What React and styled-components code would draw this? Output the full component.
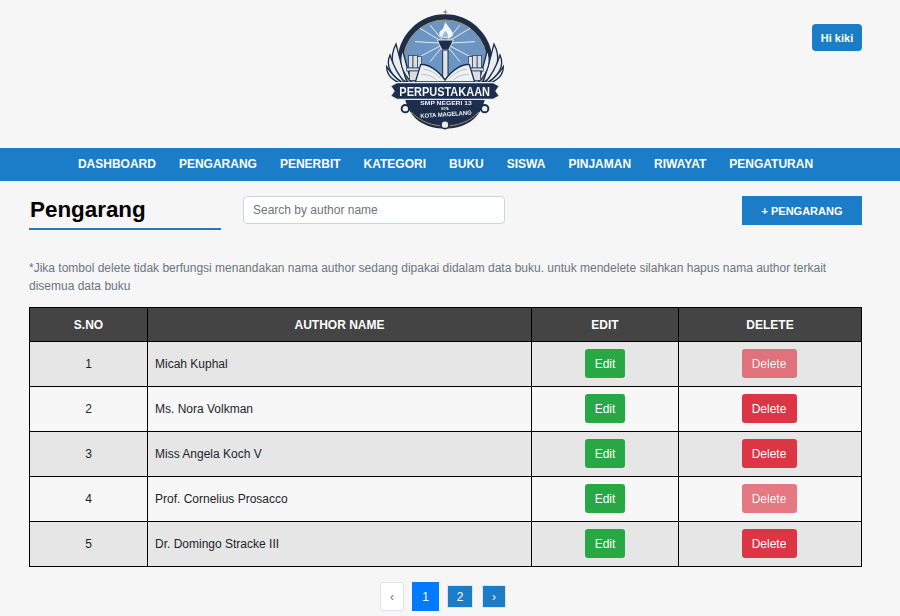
import styled, { createGlobalStyle } from "styled-components";

const GlobalStyle = createGlobalStyle`
  * { box-sizing: border-box; }
  body {
    margin: 0;
    background: #f6f6f6;
    font-family: "Liberation Sans", Arial, sans-serif;
    overflow: hidden;
  }
`;

const Page = styled.div`
  height: 616px;
  overflow: hidden;
`;

const Header = styled.header`
  height: 148px;
  position: relative;
  display: flex;
  justify-content: center;
  padding-right: 10px;
`;

const UserButton = styled.button`
  position: absolute;
  top: 24px;
  right: 38px;
  width: 50px;
  height: 27px;
  border: 0;
  border-radius: 4px;
  background: #1b7dc7;
  color: #fff;
  font: bold 11px "Liberation Sans", Arial, sans-serif;
  padding: 0;
`;

const NavBar = styled.nav`
  height: 33px;
  background: #1b7dc7;
  display: flex;
  justify-content: center;
  align-items: center;
  gap: 23px;
  padding: 0 9px 2px 0;
`;

const NavLink = styled.a`
  color: #fff;
  font-size: 12px;
  font-weight: bold;
  text-decoration: none;
`;

const Content = styled.main`
  padding: 15px 38px 0 29px;
`;

const TopRow = styled.div`
  display: flex;
  align-items: flex-start;
`;

const Title = styled.h1`
  width: 192px;
  height: 34px;
  margin: 0 22px 0 0;
  padding-left: 1px;
  border-bottom: 2px solid #1b7dc7;
  color: #000;
  font-size: 22.4px;
  line-height: 27px;
  font-weight: bold;
`;

const SearchInput = styled.input`
  width: 262px;
  height: 28px;
  padding: 0 9px;
  background: #fff;
  border: 1px solid #ced4da;
  border-radius: 4px;
  font: 12px "Liberation Sans", Arial, sans-serif;
  &::placeholder { color: #6c757d; opacity: 1; }
`;

const AddButton = styled.button`
  width: 120px;
  height: 29px;
  margin-left: auto;
  border: 0;
  background: #1b7dc7;
  color: #fff;
  font: bold 11px "Liberation Sans", Arial, sans-serif;
  padding: 0;
`;

const Note = styled.p`
  margin: 29px 0 12px;
  color: #6c757d;
  font-size: 12px;
  line-height: 18px;
`;

const Table = styled.table`
  width: 832px;
  table-layout: fixed;
  border-collapse: collapse;
  font-size: 12px;
`;

const HeadCell = styled.th`
  height: 34px;
  padding: 0;
  background: #444;
  border: 1px solid #000;
  color: #fff;
  font-size: 12px;
  font-weight: bold;
  text-align: center;
`;

const Row = styled.tr`
  background: ${(p) => (p.$shaded ? "#e6e6e6" : "#f7f7f7")};
`;

const Cell = styled.td`
  height: 45px;
  padding: ${(p) => (p.$tail ? "0 9px 0 7px" : "0 7px")};
  border: 1px solid #000;
  color: #212529;
  text-align: ${(p) => (p.$center ? "center" : "left")};
`;

const ActionButton = styled.button`
  display: block;
  width: ${(p) => (p.$danger ? "55px" : "40px")};
  height: 29px;
  margin: -1px auto 1px;
  padding: 2px 0 0;
  border: 0;
  border-radius: 3px;
  background: ${(p) => (p.$danger ? "#dc3545" : "#28a745")};
  color: #fff;
  font: 12px "Liberation Sans", Arial, sans-serif;
  opacity: ${(p) => (p.$faded ? 0.65 : 1)};
`;

const Pager = styled.div`
  display: flex;
  justify-content: center;
  align-items: center;
  gap: 8px;
  margin-top: 15px;
  padding-right: 5px;
`;

const PageButton = styled.button`
  width: ${(p) => (p.$active ? "27px" : p.$prev || p.$next ? "24px" : "26px")};
  height: ${(p) => (p.$active || p.$prev ? "29px" : "23px")};
  margin-left: ${(p) => (p.$next ? "1px" : "0")};
  padding: 0;
  border: ${(p) => (p.$active ? "0" : "1px solid #dee2e6")};
  border-radius: ${(p) => (p.$prev ? "3px" : "0")};
  background: ${(p) => (p.$active ? "#007bff" : p.$prev ? "#fff" : "#1b7dc7")};
  color: ${(p) => (p.$prev ? "#6c757d" : "#fff")};
  font: 12px "Liberation Sans", Arial, sans-serif;
`;

const authors = [
  { name: "Micah Kuphal", faded: true },
  { name: "Ms. Nora Volkman" },
  { name: "Miss Angela Koch V" },
  { name: "Prof. Cornelius Prosacco", faded: true },
  { name: "Dr. Domingo Stracke III" },
];

const menu = ["DASHBOARD", "PENGARANG", "PENERBIT", "KATEGORI", "BUKU", "SISWA", "PINJAMAN", "RIWAYAT", "PENGATURAN"];

const NAVY = "#1d2f4b";
const PALE = "#e9edf1";

// one side of the emblem, mirrored for the other
const LogoSide = ({ flip }) => (
  <g transform={flip ? "translate(450 0) scale(-1 1)" : undefined}>
    <g fill={PALE} stroke={NAVY} strokeWidth="4">
      <path d="M78 132 C58 170 62 215 112 250 C96 205 88 170 78 132Z" />
      <path d="M60 165 C46 195 62 232 108 252 C84 225 70 198 60 165Z" />
      <path d="M50 200 C50 225 70 244 104 254 C82 240 64 222 50 200Z" />
      <path d="M98 150 C86 180 94 215 124 246 C114 212 106 184 98 150Z" />
    </g>
    <g fill="#d7dee6" stroke={NAVY} strokeWidth="2">
      <rect x="116" y="166" width="13" height="38" />
      <rect x="129" y="166" width="13" height="38" />
      <rect x="142" y="170" width="13" height="34" />
      <rect x="110" y="204" width="52" height="9" />
      <rect x="118" y="213" width="34" height="28" />
    </g>
  </g>
);

const Logo = () => (
  <svg width="150" height="140" viewBox="0 0 450 420">
    <defs>
      <filter id="soft">
        <feGaussianBlur stdDeviation="0.9" />
      </filter>
    </defs>
    <g filter="url(#soft)">
      <path d="M226 28 L228 34 L234 36 L228 38 L226 44 L224 38 L218 36 L224 34Z" fill="#7d8a96" />
      <circle cx="225" cy="185" r="134" fill="#6d95c4" stroke={NAVY} strokeWidth="16" />
      <circle cx="225" cy="185" r="125" fill="none" stroke="#a98a5a" strokeWidth="3" />
      <g stroke="#e4eef7" strokeWidth="3">
        <path d="M225 130 L150 85 M225 130 L135 125 M225 130 L150 170 M225 130 L180 75 M225 130 L300 85 M225 130 L315 125 M225 130 L300 170 M225 130 L270 75 M225 130 L180 185 M225 130 L270 185" />
      </g>
      <LogoSide />
      <LogoSide flip />
      <path d="M226 66 C236 84 250 92 248 106 C246 118 204 118 208 100 C210 90 216 92 220 84 C222 78 224 72 226 66Z" fill="#f3f6f9" />
      <path d="M226 92 C232 100 236 104 233 112 H217 C216 104 222 100 226 92Z" fill="#9bbbdc" />
      <path d="M202 120 H250 L244 134 L236 150 H216 L208 134Z" fill={NAVY} stroke="#dfe4ea" strokeWidth="3" />
      <rect x="218" y="150" width="16" height="95" fill="#dfe4ea" stroke={NAVY} strokeWidth="3" />
      <path d="M225 240 C204 210 172 190 152 194 L136 246 H314 L298 194 C278 190 246 210 225 240Z" fill="#eef1f4" stroke={NAVY} strokeWidth="4" />
      <g stroke="#9aa7b5" strokeWidth="2" fill="none">
        <path d="M160 208 C180 208 196 220 212 236" />
        <path d="M154 224 C172 222 186 228 200 240" />
        <path d="M290 208 C270 208 254 220 238 236" />
        <path d="M296 224 C278 222 264 228 250 240" />
      </g>
      <path d="M104 292 H346 C332 362 280 386 225 386 C170 386 118 362 104 292Z" fill={NAVY} />
      <path d="M124 336 C150 366 190 378 225 378 C260 378 300 366 326 336" fill="none" stroke="#a98a5a" strokeWidth="3" />
      <path d="M80 248 H370 L388 258 L378 273 L388 288 L370 298 H80 L62 288 L72 273 L62 258Z" fill={NAVY} stroke={PALE} strokeWidth="4" />
      <circle cx="106" cy="326" r="11" fill="none" stroke={NAVY} strokeWidth="6" />
      <circle cx="344" cy="326" r="11" fill="none" stroke={NAVY} strokeWidth="6" />
      <circle cx="225" cy="374" r="12" fill={PALE} stroke={NAVY} strokeWidth="5" />
      <text x="224" y="289" fontFamily="Liberation Sans" fontWeight="bold" fontSize="40" fill="#f3f6f9" textAnchor="middle" textLength="272" lengthAdjust="spacingAndGlyphs">PERPUSTAKAAN</text>
      <text x="228" y="316" fontFamily="Liberation Sans" fontWeight="bold" fontSize="18" fill="#f3f6f9" textAnchor="middle" textLength="154" lengthAdjust="spacingAndGlyphs">SMP NEGERI 13</text>
      <text x="225" y="329" fontFamily="Liberation Sans" fontWeight="bold" fontSize="8" fill="#f3f6f9" textAnchor="middle">KOTA</text>
      <text x="228" y="349" fontFamily="Liberation Sans" fontWeight="bold" fontSize="18" fill="#f3f6f9" textAnchor="middle" textLength="154" lengthAdjust="spacingAndGlyphs" transform="rotate(-4 228 342)">KOTA MAGELANG</text>
    </g>
  </svg>
);

const App = () => {
  return (
    <Page>
      <GlobalStyle />
      <Header>
        <Logo />
        <UserButton>Hi kiki</UserButton>
      </Header>
      <NavBar>
        {menu.map((item) => (
          <NavLink key={item} href="#">{item}</NavLink>
        ))}
      </NavBar>
      <Content>
        <TopRow>
          <Title>Pengarang</Title>
          <SearchInput placeholder="Search by author name" />
          <AddButton>+ PENGARANG</AddButton>
        </TopRow>
        <Note>
          *Jika tombol delete tidak berfungsi menandakan nama author sedang dipakai didalam data buku. untuk mendelete silahkan hapus nama author terkait
          <br />
          disemua data buku
        </Note>
        <Table>
          <colgroup>
            <col width="118" />
            <col width="384" />
            <col width="147" />
            <col width="183" />
          </colgroup>
          <thead>
            <tr>
              <HeadCell>S.NO</HeadCell>
              <HeadCell>AUTHOR NAME</HeadCell>
              <HeadCell>EDIT</HeadCell>
              <HeadCell>DELETE</HeadCell>
            </tr>
          </thead>
          <tbody>
            {authors.map((a, i) => (
              <Row key={a.name} $shaded={i % 2 === 0}>
                <Cell $center>{i + 1}</Cell>
                <Cell>{a.name}</Cell>
                <Cell $center><ActionButton>Edit</ActionButton></Cell>
                <Cell $center $tail><ActionButton $danger $faded={a.faded}>Delete</ActionButton></Cell>
              </Row>
            ))}
          </tbody>
        </Table>
        <Pager>
          <PageButton $prev>‹</PageButton>
          <PageButton $active>1</PageButton>
          <PageButton>2</PageButton>
          <PageButton $next>›</PageButton>
        </Pager>
      </Content>
    </Page>
  );
};

export default App;
